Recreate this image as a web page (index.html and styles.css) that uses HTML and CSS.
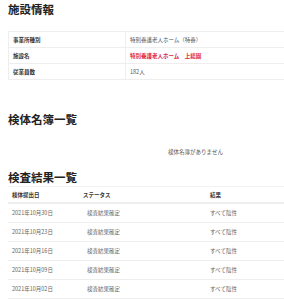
FILE: index.html
```html
<!DOCTYPE html>
<html lang="ja">
<head>
<meta charset="utf-8">
<link rel="stylesheet" href="styles.css">
</head>
<body>
<div class="page">
  <h2 class="title title-first">施設情報</h2>
  <table class="info">
    <tr><th>事業所種別</th><td>特別養護老人ホーム（特養）</td></tr>
    <tr><th>施設名</th><td class="red">特別養護老人ホーム　上総園</td></tr>
    <tr><th>従業員数</th><td>182人</td></tr>
  </table>

  <h2 class="title title-second">検体名簿一覧</h2>
  <p class="empty">検体名簿がありません</p>

  <h2 class="title title-third">検査結果一覧</h2>
  <table class="results">
    <thead>
      <tr><th class="c1">検体提出日</th><th class="c2">ステータス</th><th class="c3">結果</th></tr>
    </thead>
    <tbody>
      <tr><td>2021年10月30日</td><td>検査結果確定</td><td>すべて陰性</td></tr>
      <tr><td>2021年10月23日</td><td>検査結果確定</td><td>すべて陰性</td></tr>
      <tr><td>2021年10月16日</td><td>検査結果確定</td><td>すべて陰性</td></tr>
      <tr><td>2021年10月09日</td><td>検査結果確定</td><td>すべて陰性</td></tr>
      <tr><td>2021年10月02日</td><td>検査結果確定</td><td>すべて陰性</td></tr>
    </tbody>
  </table>
</div>
</body>
</html>
```
FILE: styles.css
```css
html { overflow: hidden; background: #fff; }
body {
  margin: 0;
  font-family: "Noto Sans CJK JP", "Noto Sans", sans-serif;
  color: #333;
}
.page {
  width: 375px;
  padding: 0 8px;
}
.title {
  margin: 0;
  font-size: 11.5px;
  line-height: 18px;
  font-weight: 700;
  color: #222;
}
.title-second { margin-top: 30px; }
.title-third { margin-top: 11px; }

.info {
  margin-top: 13px;
  width: 100%;
  border-collapse: collapse;
  border: 1px solid #eee;
  font-size: 5.5px;
}
.info th, .info td {
  height: 15px;
  padding: 0 4px;
  border-bottom: 1px solid #eee;
  text-align: left;
  vertical-align: middle;
}
.info th {
  width: 108px;
  font-weight: 700;
  color: #333;
  border-right: 1px solid #eee;
}
.info td { color: #555; }
.info td.red { color: #e0283c; font-weight: 700; }

.empty {
  margin: 19px 0 0;
  text-align: center;
  font-size: 5.5px;
  line-height: 10px;
  color: #555;
}

.results {
  width: 100%;
  border-collapse: collapse;
  font-size: 5.5px;
}
.results th, .results td {
  padding: 0 4px;
  text-align: left;
  vertical-align: middle;
}
.results thead th {
  height: 15px;
  font-weight: 700;
  color: #333;
  border-top: 1px solid #f2f2f2;
  border-bottom: 2px solid #eee;
}
.results td {
  height: 18px;
  color: #666;
  border-bottom: 1px solid #eee;
}
.results td:nth-child(2) { padding-left: 8px; }
.results .c1 { width: 63px; }
.results .c2 { width: 119px; }
```
